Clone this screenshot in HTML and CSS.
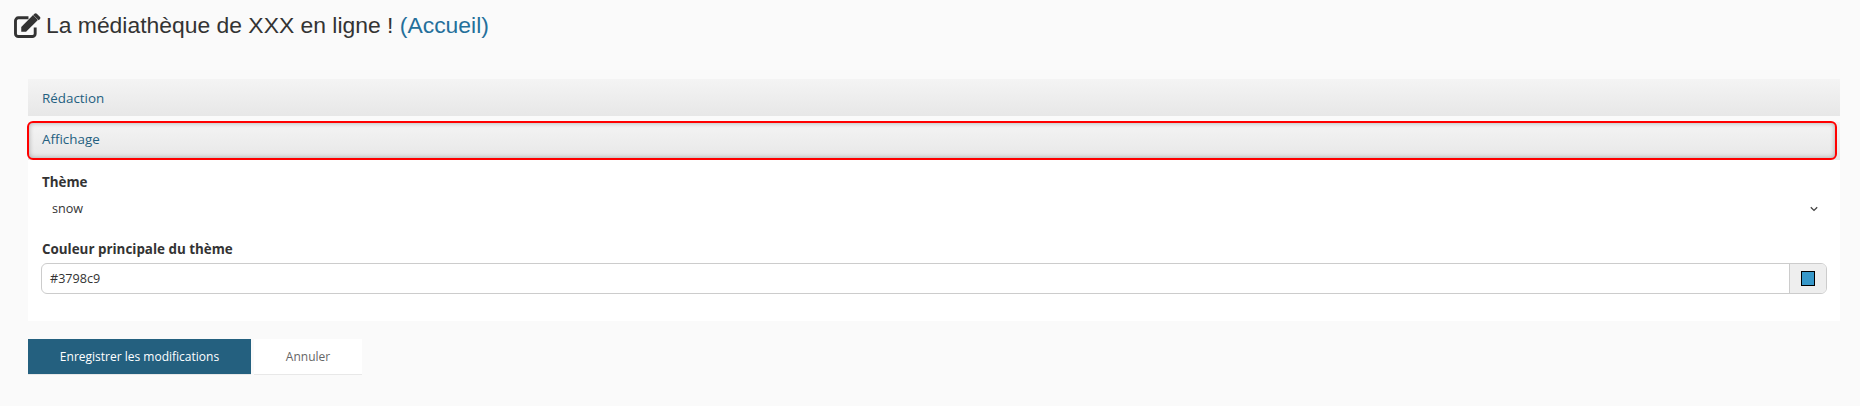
FILE: index.html
```html
<!DOCTYPE html>
<html lang="fr">
<head>
    <meta charset="UTF-8">
    <title>La médiathèque de XXX en ligne !</title>
    <link rel="stylesheet" href="styles.css">
</head>
<body>
    <h1 class="page-title">
        <svg class="title-icon" viewBox="0 0 28 26" aria-hidden="true">
            <path d="M22 15v6.500a3 3 0 0 1-3 3H4.500a3 3 0 0 1-3-3V8a3 3 0 0 1 3-3H15" fill="none" stroke="#333" stroke-width="3"/>
            <path d="M7.500 19.500v-5L19.800 2.200l5 5L12.500 19.500z" fill="#333"/>
            <path d="M21.200 0.800a1.800 1.800 0 0 1 2.500 0l3.100 3.100a1.800 1.800 0 0 1 0 2.500l-1.200 1.200-5.600-5.600z" fill="#333"/>
        </svg>
        <span>La médiathèque de XXX en ligne ! <a href="#">(Accueil)</a></span>
    </h1>

    <div class="accordion">
        <div class="acc-header"><a href="#">Rédaction</a></div>
        <div class="acc-header acc-active">
            <a href="#">Affichage</a>
            <div class="red-mark"></div>
        </div>
        <div class="acc-body">
            <label class="field-label">Thème</label>
            <div class="select-row">
                <span>snow</span>
                <svg class="chevron" viewBox="0 0 8 6" aria-hidden="true">
                    <path d="M0.800 1.200L4 4.400l3.200-3.200" fill="none" stroke="#444" stroke-width="1.300"/>
                </svg>
            </div>
            <label class="field-label">Couleur principale du thème</label>
            <div class="color-input">
                <span class="color-value">#3798c9</span>
                <span class="color-addon"><i class="swatch"></i></span>
            </div>
        </div>
    </div>

    <div class="actions">
        <button class="btn btn-save">Enregistrer les modifications</button>
        <button class="btn btn-cancel">Annuler</button>
    </div>
</body>
</html>
```

FILE: styles.css
```css
/* General Page Styling */
body {
    margin: 0;
    padding: 0 20px 0 28px;
    height: 406px;
    overflow: hidden;
    background-color: #fafafa;
    color: #333;
    font-family: "Open Sans", sans-serif;
    font-size: 12.6px;
}

a {
    color: #246080;
    text-decoration: none;
}

/* Title */
.page-title {
    display: flex;
    align-items: center;
    gap: 5px;
    margin: 0 0 0 -14px;
    height: 51px;
    font-family: "Liberation Sans", Arial, sans-serif;
    font-size: 22.9px;
    font-weight: 400;
    color: #333;
}

.page-title a {
    color: #246f9a;
}

.title-icon {
    width: 27px;
    height: 25px;
    flex: none;
}

/* Accordion */
.accordion {
    margin-top: 28px;
}

.acc-header {
    position: relative;
    display: flex;
    align-items: center;
    height: 37px;
    padding-left: 14px;
    font-size: 13.4px;
    background: linear-gradient(#f4f4f4, #e7e7e7);
}

.acc-active {
    margin-top: 6px;
    height: 38px;
}

.acc-active a {
    margin-bottom: 4px;
}

.red-mark {
    position: absolute;
    top: -1px;
    left: -1px;
    right: 3px;
    bottom: 0;
    border: 2px solid #f00;
    border-radius: 6px;
    box-shadow: inset 0 0 5px rgba(0, 0, 0, 0.3);
}

.acc-body {
    height: 161px;
    padding: 14px 13px 0;
    box-sizing: border-box;
    background-color: #fff;
}

.field-label {
    display: block;
    padding-left: 1px;
    font-size: 13.4px;
    font-weight: 700;
    line-height: 17px;
}

.select-row {
    display: flex;
    align-items: center;
    justify-content: space-between;
    height: 31px;
    padding: 0 9px 0 11px;
    margin-top: 2px;
    margin-bottom: 17px;
}

.chevron {
    width: 8px;
    height: 6px;
}

.color-input {
    display: flex;
    height: 31px;
    margin-top: 5px;
    box-sizing: border-box;
    border: 1px solid #ccc;
    border-radius: 6px;
    overflow: hidden;
}

.color-value {
    flex: 1;
    padding-left: 8px;
    line-height: 29px;
}

.color-addon {
    display: flex;
    align-items: center;
    justify-content: center;
    width: 36px;
    border-left: 1px solid #ccc;
    background-color: #eee;
}

.swatch {
    width: 12px;
    height: 13px;
    border: 1px solid #000;
    background-color: #3798c9;
}

/* Buttons */
.actions {
    display: flex;
    gap: 3px;
    margin-top: 18px;
}

.btn {
    height: 36px;
    border: none;
    font-family: "Open Sans", sans-serif;
    font-size: 12px;
    padding: 0;
}

.btn-save {
    width: 223px;
    background-color: #24607f;
    border-bottom: 1px solid #e8e8e8;
    color: #fff;
}

.btn-cancel {
    width: 108px;
    background-color: #fff;
    border-bottom: 1px solid #e8e8e8;
    color: #666;
}
```
